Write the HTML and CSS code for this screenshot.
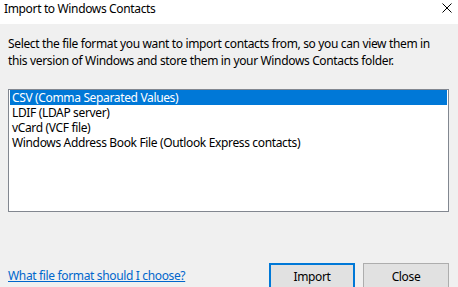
FILE: index.html
```html
<!DOCTYPE html>
<html>
<head>
  <title>Import to Windows Contacts</title>
  <link rel="stylesheet" href="styles.css">
</head>
<body>
  <div class="dialog">
    <div class="titlebar">
      <span class="title">Import to Windows Contacts</span>
      <svg class="close-x" width="10" height="10" viewBox="0 0 10 10">
        <path d="M0.5 0.5 L9.5 9.5 M9.5 0.5 L0.5 9.5" stroke="#000" stroke-width="1" fill="none"/>
      </svg>
    </div>

    <div class="content">
      <p class="intro">Select the file format you want to import contacts from, so you can view them in this version of Windows and store them in your Windows Contacts folder.</p>

      <ul class="format-list">
        <li class="selected">CSV (Comma Separated Values)</li>
        <li>LDIF (LDAP server)</li>
        <li>vCard (VCF file)</li>
        <li>Windows Address Book File (Outlook Express contacts)</li>
      </ul>

      <div class="footer">
        <a href="#" class="help-link">What file format should I choose?</a>
        <div class="buttons">
          <button class="btn default">Import</button>
          <button class="btn">Close</button>
        </div>
      </div>
    </div>
  </div>
</body>
</html>
```

FILE: styles.css
```css
body {
  margin: 0;
  font-family: "Noto Sans", "Open Sans", sans-serif;
  font-size: 12px;
  letter-spacing: -0.35px;
  color: #000;
  background: #f0f0f0;
  overflow: hidden;
}

.titlebar {
  height: 24px;
  background: #fff;
  display: flex;
  align-items: flex-start;
  justify-content: space-between;
  padding: 0 6px 0 4px;
}
.title { line-height: 16px; margin-top: 1px; }
.close-x { margin-top: 3px; }

.content { padding: 11px 9px 0 8px; }

.intro {
  margin: 0;
  line-height: 17px;
}

.format-list {
  list-style: none;
  margin: 20px 0 0 0;
  padding: 0 1px 1px 1px;
  height: 120px;
  background: #fff;
  border: 1px solid #828790;
}
.format-list li {
  height: 15px;
  line-height: 15px;
  padding-left: 2px;
}
.format-list li.selected {
  background: #0078d7;
  color: #fff;
}

.footer {
  display: flex;
  justify-content: space-between;
  align-items: flex-start;
  margin-top: 51px;
}
.help-link {
  color: #0066cc;
  margin-top: 5px;
  line-height: 16px;
}
.buttons { display: flex; gap: 8px; }
.btn {
  width: 86px;
  height: 26px;
  background: #e1e1e1;
  border: 1px solid #adadad;
  font: inherit;
  letter-spacing: inherit;
  padding: 0;
  color: #000;
}
.btn.default { border: 2px solid #0078d7; }
```
